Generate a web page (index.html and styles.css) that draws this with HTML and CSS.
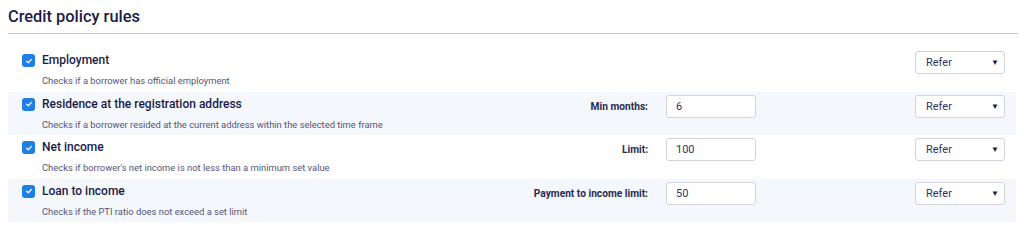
FILE: index.html
```html
<!DOCTYPE html>
<html>
<head>
<meta charset="utf-8">
<link rel="stylesheet" href="styles.css">
</head>
<body>
<h1 class="title">Credit policy rules</h1>
<div class="rules">
  <div class="rule">
    <div class="rule-main">
      <span class="check"><svg viewBox="0 0 10 10" width="8" height="8"><path d="M2 5.2 L4.2 7.2 L8 3" fill="none" stroke="#fff" stroke-width="1.6" stroke-linecap="round" stroke-linejoin="round"/></svg></span>
      <div class="rule-text">
        <div class="rule-name">Employment</div>
        <div class="rule-desc">Checks if a borrower has official employment</div>
      </div>
    </div>
    <div class="select"><span>Refer</span><span class="caret">▼</span></div>
  </div>
  <div class="rule alt">
    <div class="rule-main">
      <span class="check"><svg viewBox="0 0 10 10" width="8" height="8"><path d="M2 5.2 L4.2 7.2 L8 3" fill="none" stroke="#fff" stroke-width="1.6" stroke-linecap="round" stroke-linejoin="round"/></svg></span>
      <div class="rule-text">
        <div class="rule-name">Residence at the registration address</div>
        <div class="rule-desc">Checks if a borrower resided at the current address within the selected time frame</div>
      </div>
    </div>
    <div class="param"><span class="param-label">Min months:</span><div class="input">6</div></div>
    <div class="select"><span>Refer</span><span class="caret">▼</span></div>
  </div>
  <div class="rule">
    <div class="rule-main">
      <span class="check"><svg viewBox="0 0 10 10" width="8" height="8"><path d="M2 5.2 L4.2 7.2 L8 3" fill="none" stroke="#fff" stroke-width="1.6" stroke-linecap="round" stroke-linejoin="round"/></svg></span>
      <div class="rule-text">
        <div class="rule-name">Net income</div>
        <div class="rule-desc">Checks if borrower's net income is not less than a minimum set value</div>
      </div>
    </div>
    <div class="param"><span class="param-label">Limit:</span><div class="input">100</div></div>
    <div class="select"><span>Refer</span><span class="caret">▼</span></div>
  </div>
  <div class="rule alt">
    <div class="rule-main">
      <span class="check"><svg viewBox="0 0 10 10" width="8" height="8"><path d="M2 5.2 L4.2 7.2 L8 3" fill="none" stroke="#fff" stroke-width="1.6" stroke-linecap="round" stroke-linejoin="round"/></svg></span>
      <div class="rule-text">
        <div class="rule-name">Loan to income</div>
        <div class="rule-desc">Checks if the PTI ratio does not exceed a set limit</div>
      </div>
    </div>
    <div class="param"><span class="param-label">Payment to income limit:</span><div class="input">50</div></div>
    <div class="select"><span>Refer</span><span class="caret">▼</span></div>
  </div>
</div>
</body>
</html>
```

FILE: styles.css
```css
body {
  margin: 0;
  padding: 0 6px 0 8px;
  font-family: Roboto, "Noto Sans", sans-serif;
  color: #1b1b48;
  background: #fff;
}
.title {
  margin: 0;
  padding-top: 6px;
  font-size: 16.4px;
  font-weight: 500;
  line-height: 22px;
  height: 27px;
  border-bottom: 1px solid #c6c6d6;
  color: #1b1b4b;
}
.rules {
  margin-top: 14px;
  margin-right: 2px;
}
.rule {
  display: flex;
  align-items: flex-start;
  height: 43.5px;
  box-sizing: border-box;
  padding: 3px 11px 0 14px;
}
.rule.alt {
  background: #f4f8fc;
}
.rule-main {
  flex: 1;
  display: flex;
  align-items: flex-start;
}
.check {
  width: 13px;
  height: 13px;
  border-radius: 3px;
  background: #1f7fe6;
  display: flex;
  align-items: center;
  justify-content: center;
  margin-top: 3px;
  flex-shrink: 0;
}
.rule-text {
  margin-left: 7px;
}
.rule-name {
  font-size: 12px;
  font-weight: 500;
  line-height: 18px;
  color: #1b1b48;
}
.rule-desc {
  margin-top: 6px;
  font-size: 9.4px;
  line-height: 12px;
  color: #55557a;
}
.param {
  display: flex;
  align-items: center;
  gap: 18px;
}
.param-label {
  font-size: 10.2px;
  font-weight: 700;
  color: #2b2b50;
}
.input, .select {
  width: 90px;
  height: 23px;
  box-sizing: border-box;
  border: 1px solid #d3d3dc;
  border-radius: 3px;
  background: #fff;
  font-size: 11px;
  color: #33335a;
  display: flex;
  align-items: center;
  padding: 0 9px;
}
.select {
  margin-left: 159px;
  justify-content: space-between;
  padding: 0 5px 0 10px;
}
.caret {
  font-size: 8px;
  color: #1b1b48;
}
```
